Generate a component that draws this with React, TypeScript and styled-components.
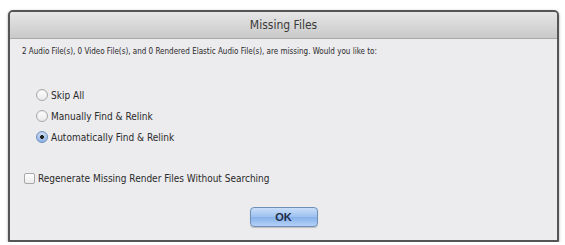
import React from 'react';
import styled, { createGlobalStyle } from 'styled-components';

const GlobalStyle = createGlobalStyle`
  html, body {
    margin: 0;
    padding: 0;
    background: #ffffff;
  }
  body {
    font-family: "Liberation Sans Narrow", "DejaVu Sans Condensed", "Liberation Sans", sans-serif;
  }
`;

const options = [
  { id: 'skip', label: 'Skip All', checked: false },
  { id: 'manual', label: 'Manually Find & Relink', checked: false },
  { id: 'auto', label: 'Automatically Find & Relink', checked: true },
];

const Page = styled.div`
  padding: 10px 6px 0 8px;
`;

const Dialog = styled.div`
  width: 547px;
  height: 228px;
  border: 2px solid #555555;
  border-radius: 5px 5px 1px 1px;
  background: #ecebee;
  box-shadow: 0 1px 3px rgba(0, 0, 0, 0.35);
  display: flex;
  flex-direction: column;
  overflow: hidden;
`;

const TitleBar = styled.div`
  height: 26px;
  display: flex;
  align-items: center;
  justify-content: center;
  background: linear-gradient(#e6e6e6, #c9c9c9);
  border-bottom: 1px solid #a9a9a9;
  color: #3a3a3a;
  font-size: 12px;
`;

const Body = styled.div`
  flex: 1;
  display: flex;
  flex-direction: column;
  padding: 5px 0 0 12px;
  color: #2a2a2a;
  font-size: 10px;
`;

const Message = styled.div`
  height: 16px;
  line-height: 16px;
  font-size: 8px;
`;

const RadioGroup = styled.div`
  display: flex;
  flex-direction: column;
  gap: 7px;
  margin: 28px 0 0 14px;
`;

const OptionRow = styled.label`
  display: flex;
  align-items: center;
  gap: 3px;
  height: 14px;
`;

const Radio = styled.span<{ $checked: boolean }>`
  width: 12px;
  height: 12px;
  border-radius: 50%;
  box-sizing: border-box;
  border: 1px solid ${(p) => (p.$checked ? '#6d8fbf' : '#a8a8a8')};
  background: ${(p) =>
    p.$checked
      ? 'radial-gradient(circle, #222 0 1.6px, transparent 2.2px), linear-gradient(#cfe0f7, #8fb2e2)'
      : 'linear-gradient(#ffffff, #e9e9e9)'};
  box-shadow: inset 0 1px 1px rgba(0, 0, 0, 0.08);
`;

const CheckRow = styled.label`
  display: flex;
  align-items: center;
  gap: 3px;
  margin: 27px 0 0 2px;
  height: 14px;
`;

const Checkbox = styled.span`
  width: 11px;
  height: 11px;
  box-sizing: border-box;
  border: 1px solid #a8a8a8;
  border-radius: 2px;
  background: linear-gradient(#ffffff, #ebebeb);
`;

const Footer = styled.div`
  display: flex;
  justify-content: center;
  margin-top: 22px;
  padding-right: 12px;
`;

const Button = styled.button`
  width: 68px;
  height: 20px;
  border: 1px solid #6f8fb6;
  border-radius: 4px;
  background: linear-gradient(#c9defa 0%, #9cc0ee 50%, #86b1ea 51%, #b3d1f7 100%);
  color: #1e2e4a;
  font-family: "Liberation Sans", sans-serif;
  font-size: 11px;
  font-weight: bold;
  padding: 0;
  box-shadow: 0 1px 1px rgba(0, 0, 0, 0.2);
`;

export default function App() {
  return (
    <>
      <GlobalStyle />
      <Page>
        <Dialog>
          <TitleBar>Missing Files</TitleBar>
          <Body>
            <Message>
              2 Audio File(s), 0 Video File(s), and 0 Rendered Elastic Audio File(s), are missing. Would you like to:
            </Message>
            <RadioGroup>
              {options.map((o) => (
                <OptionRow key={o.id}>
                  <Radio $checked={o.checked} />
                  {o.label}
                </OptionRow>
              ))}
            </RadioGroup>
            <CheckRow>
              <Checkbox />
              Regenerate Missing Render Files Without Searching
            </CheckRow>
            <Footer>
              <Button>OK</Button>
            </Footer>
          </Body>
        </Dialog>
      </Page>
    </>
  );
}
